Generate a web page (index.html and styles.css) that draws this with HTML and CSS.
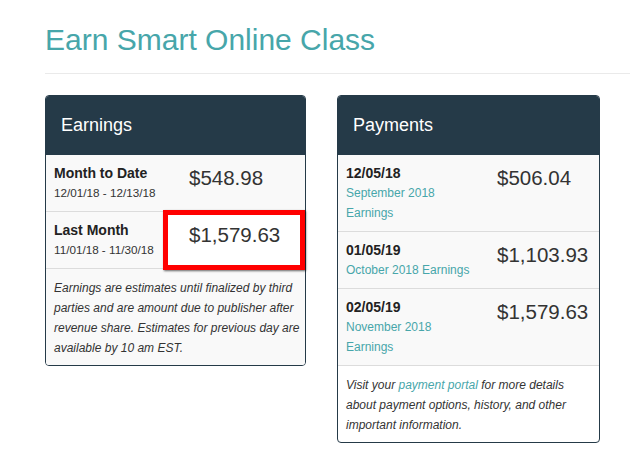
FILE: index.html
```html
<!DOCTYPE html>
<html>
<head>
<meta charset="utf-8">
<link rel="stylesheet" href="styles.css">
</head>
<body>
<div class="page">
  <h1 class="title">Earn Smart Online Class</h1>
  <hr class="rule">
  <div class="cards">
    <div class="card earnings">
      <div class="card-head">Earnings</div>
      <div class="row">
        <div class="label">
          <div class="name">Month to Date</div>
          <div class="range">12/01/18 - 12/13/18</div>
        </div>
        <div class="amount">$548.98</div>
      </div>
      <div class="row">
        <div class="label">
          <div class="name">Last Month</div>
          <div class="range">11/01/18 - 11/30/18</div>
        </div>
        <div class="amount highlighted"><span class="mark"></span><span class="amt-text">$1,579.63</span></div>
      </div>
      <div class="note gray">Earnings are estimates until finalized by third parties and are amount due to publisher after revenue share. Estimates for previous day are available by 10 am EST.</div>
    </div>
    <div class="card payments">
      <div class="card-head">Payments</div>
      <div class="row">
        <div class="label">
          <div class="name">12/05/18</div>
          <div class="sub">September 2018 Earnings</div>
        </div>
        <div class="amount">$506.04</div>
      </div>
      <div class="row">
        <div class="label">
          <div class="name">01/05/19</div>
          <div class="sub">October 2018 Earnings</div>
        </div>
        <div class="amount">$1,103.93</div>
      </div>
      <div class="row">
        <div class="label">
          <div class="name">02/05/19</div>
          <div class="sub">November 2018 Earnings</div>
        </div>
        <div class="amount">$1,579.63</div>
      </div>
      <div class="note">Visit your <span class="link">payment portal</span> for more details about payment options, history, and other important information.</div>
    </div>
  </div>
</div>
</body>
</html>
```
FILE: styles.css
```css
* { box-sizing: border-box; }
html, body { margin: 0; padding: 0; background: #fff; }
body {
  font-family: "Liberation Sans", Arial, Helvetica, sans-serif;
  color: #333;
  width: 630px;
  height: 465px;
  overflow: hidden;
}
.page {
  padding-left: 45px;
}
.title {
  margin: 23px 0 0 0;
  font-size: 30px;
  line-height: 33px;
  font-weight: normal;
  color: #47a6aa;
}
.rule {
  margin: 17px 0 0 0;
  border: 0;
  border-top: 1px solid #eaeaea;
  height: 0;
}
.cards {
  display: grid;
  grid-template-columns: 261px 263px;
  column-gap: 31px;
  align-items: start;
  margin-top: 21px;
}
.card {
  border: 1px solid #253a48;
  border-radius: 4px;
  background: #fff;
}
.card-head {
  height: 59px;
  background: #253a48;
  color: #fff;
  font-size: 18px;
  display: flex;
  align-items: center;
  padding-left: 15px;
  border-radius: 3px 3px 0 0;
}
.row {
  display: grid;
  background: #f9f9f9;
  border-bottom: 1px solid #dcdcdc;
  position: relative;
}
.earnings .row { grid-template-columns: 143px 1fr; }
.payments .row { grid-template-columns: 159px 1fr; }
.label {
  padding: 8px 0 8px 8px;
}
.payments .label { padding-right: 20px; }
.name {
  font-weight: bold;
  font-size: 14px;
  line-height: 20px;
  color: #222;
}
.range {
  font-size: 11.7px;
  line-height: 20px;
  color: #333;
}
.sub {
  font-size: 12px;
  line-height: 20px;
  color: #47a6aa;
}
.amount {
  font-size: 20.5px;
  line-height: 22px;
  padding-top: 12px;
  color: #333;
}
.highlighted { position: relative; }
.mark {
  position: absolute;
  left: -26px;
  top: -2px;
  width: 142px;
  height: 60px;
  border: 5px solid #f00;
  background: #fff;
  box-shadow: 1px 1px 2px rgba(0, 0, 0, 0.6);
}
.amt-text { position: relative; }
.note {
  padding: 9px 2px 7px 8px;
  font-size: 12px;
  line-height: 20px;
  font-style: italic;
  color: #333;
  border-radius: 0 0 3px 3px;
}
.payments .note { padding-right: 8px; }
.note.gray { background: #f9f9f9; }
.link {
  color: #47a6aa;
}
```
